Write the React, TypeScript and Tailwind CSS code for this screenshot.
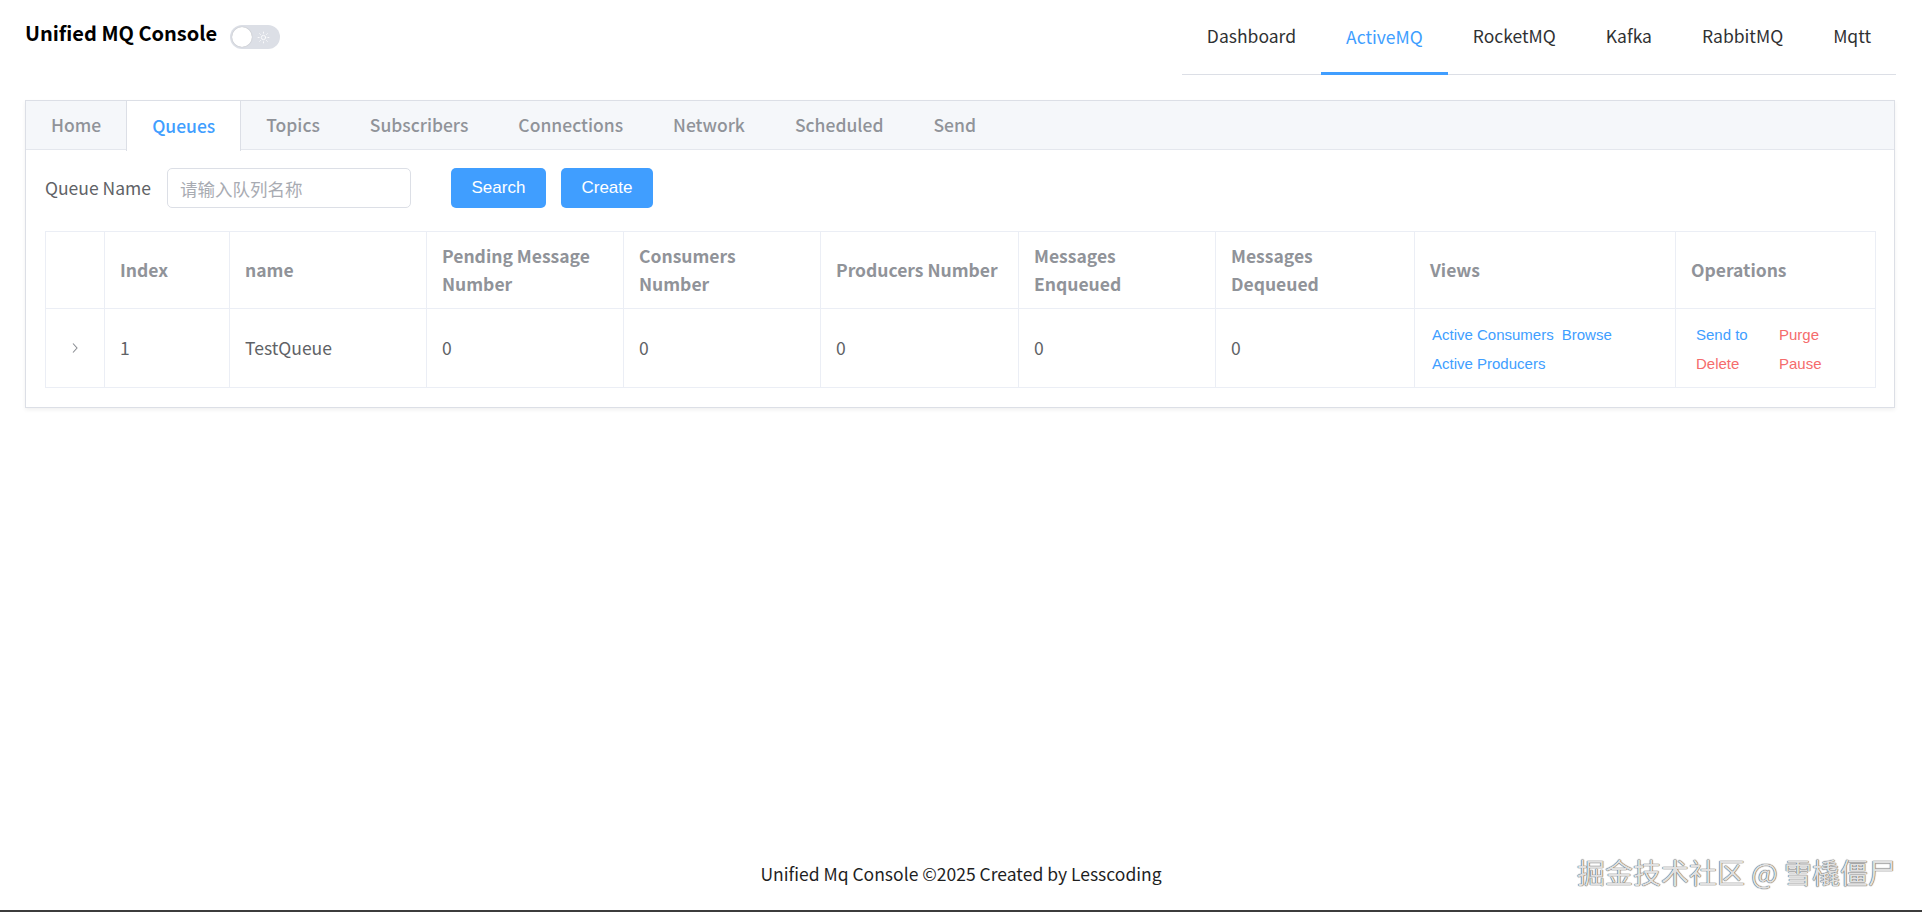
import { Sun } from 'lucide-react';

const navItems = ['Dashboard', 'ActiveMQ', 'RocketMQ', 'Kafka', 'RabbitMQ', 'Mqtt'];
const tabs = ['Home', 'Queues', 'Topics', 'Subscribers', 'Connections', 'Network', 'Scheduled', 'Send'];

const columns = [
  { title: '', width: 59 },
  { title: 'Index', width: 125 },
  { title: 'name', width: 197 },
  { title: 'Pending Message Number', width: 197 },
  { title: 'Consumers Number', width: 197 },
  { title: 'Producers Number', width: 198 },
  { title: 'Messages Enqueued', width: 197 },
  { title: 'Messages Dequeued', width: 199 },
  { title: 'Views', width: 261 },
  { title: 'Operations', width: 200 },
];

const font = { fontFamily: '"Noto Sans CJK SC", "Noto Sans", sans-serif' };
const arial = { fontFamily: '"Liberation Sans", Arial, sans-serif' };

const Header = () => (
  <div className="flex justify-between pl-[25px] pr-[26px]">
    <div className="flex items-start">
      <h1 className="h-[66px] text-[20px] leading-[66px] font-bold text-black">Unified MQ Console</h1>
      <div className="ml-[13px] mt-[25px] flex h-[24px] w-[50px] items-center rounded-full bg-[#dcdfe6] px-[2px]">
        <div className="h-[20px] w-[20px] rounded-full bg-white shadow-[0_0_1px_rgba(0,0,0,0.3)]" />
        <Sun size={13} strokeWidth={1.5} className="ml-[5px] text-white" />
      </div>
    </div>
    <nav className="flex h-[75px] border-b border-[#dcdfe6]">
      {navItems.map((item) => (
        <div
          key={item}
          className={
            item === 'ActiveMQ'
              ? 'flex h-[75px] items-center border-b-[3px] border-[#409eff] px-[25px] pt-[2px] text-[17.5px] text-[#409eff]'
              : 'flex h-[74px] items-center px-[25px] pb-[1px] text-[17.5px] text-[#303133]'
          }
        >
          {item}
        </div>
      ))}
    </nav>
  </div>
);

const Chevron = () => (
  <svg width="8" height="12" viewBox="0 0 8 12" className="mx-auto">
    <path d="M2 1.5 L6 6 L2 10.5" fill="none" stroke="#8a8d93" strokeWidth="1.1" />
  </svg>
);

const QueueTable = () => (
  <table className="w-full table-fixed border-collapse border border-[#ebeef5]">
    <colgroup>
      {columns.map((c, i) => (
        <col key={i} style={{ width: c.width }} />
      ))}
    </colgroup>
    <thead>
      <tr className="h-[77px]">
        {columns.map((c, i) => (
          <th
            key={i}
            className="border border-[#ebeef5] px-[15px] pb-[1px] text-left align-middle text-[17.5px] leading-[28px] font-bold text-[#909399]"
          >
            {c.title}
          </th>
        ))}
      </tr>
    </thead>
    <tbody>
      <tr className="h-[79px] text-[17.5px] text-[#606266]">
        <td className="border border-[#ebeef5]">
          <Chevron />
        </td>
        <td className="border border-[#ebeef5] px-[15px]">1</td>
        <td className="border border-[#ebeef5] px-[15px]">TestQueue</td>
        <td className="border border-[#ebeef5] px-[15px]">0</td>
        <td className="border border-[#ebeef5] px-[15px]">0</td>
        <td className="border border-[#ebeef5] px-[15px]">0</td>
        <td className="border border-[#ebeef5] px-[15px]">0</td>
        <td className="border border-[#ebeef5] px-[15px]">0</td>
        <td className="border border-[#ebeef5] pl-[17px] pt-[2px]">
          <div className="flex flex-wrap gap-x-[8px] text-[15px] leading-[29px] text-[#409eff]" style={arial}>
            <span>Active Consumers</span>
            <span>Browse</span>
            <span>Active Producers</span>
          </div>
        </td>
        <td className="border border-[#ebeef5] pl-[20px] pt-[2px]">
          <div className="grid grid-cols-[83px_83px] text-[15px] leading-[29px]" style={arial}>
            <span className="text-[#409eff]">Send to</span>
            <span className="text-[#f56c6c]">Purge</span>
            <span className="text-[#f56c6c]">Delete</span>
            <span className="text-[#f56c6c]">Pause</span>
          </div>
        </td>
      </tr>
    </tbody>
  </table>
);

export default function App() {
  return (
    <div className="relative flex h-[912px] flex-col border-b-2 border-[#3c3c3c] bg-white" style={font}>
      <Header />
      <main className="flex-1 pt-[25px] pl-[25px] pr-[27px]">
        <div className="border border-[#dcdfe6] bg-white shadow-[0_2px_4px_rgba(0,0,0,0.06)]">
          <div className="flex h-[49px] border-b border-[#e4e7ed] bg-[#f5f7fa]">
            {tabs.map((t) => (
              <div
                key={t}
                className={
                  t === 'Queues'
                    ? '-mb-px flex h-[50px] items-center border-x border-[#dcdfe6] bg-white px-[25px] text-[17.5px] font-medium text-[#409eff]'
                    : 'flex items-center px-[25px] text-[17.5px] font-medium text-[#909399]'
                }
              >
                {t}
              </div>
            ))}
          </div>
          <div className="px-[19px] pt-[18px] pb-[19px]">
            <div className="flex items-center">
              <label className="text-[17.5px] text-[#606266]">Queue Name</label>
              <input
                className="ml-[16px] h-[40px] w-[244px] rounded-[5px] border border-[#dcdfe6] pl-[12px] text-[17.5px] outline-none placeholder:text-[#a8abb2]"
                placeholder="请输入队列名称"
              />
              <div className="ml-[40px] flex gap-[15px]" style={arial}>
                <button className="h-[40px] w-[95px] rounded-[5px] bg-[#409eff] text-[17px] text-white">Search</button>
                <button className="h-[40px] w-[92px] rounded-[5px] bg-[#409eff] text-[17px] text-white">Create</button>
              </div>
            </div>
            <div className="mt-[23px]">
              <QueueTable />
            </div>
          </div>
        </div>
      </main>
      <footer className="flex h-[75px] items-center justify-center pt-[4px] text-[17.5px] text-[#1f1f1f]">
        Unified Mq Console ©2025 Created by Lesscoding
      </footer>
      <div className="absolute right-[26px] bottom-[17px] text-[28px] text-[#e0e0e0] [text-shadow:0_0_1px_#444,0_0_1px_#444]">
        掘金技术社区 @ 雪橇僵尸
      </div>
    </div>
  );
}
